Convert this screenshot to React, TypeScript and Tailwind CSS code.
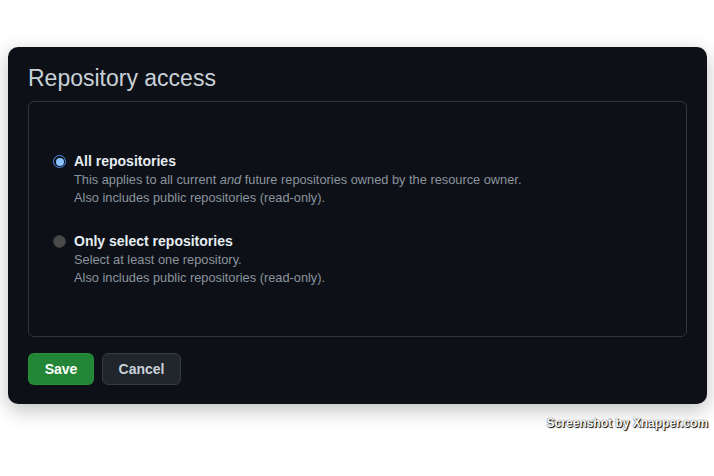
import type { ReactNode } from 'react';

const font = { fontFamily: '"Liberation Sans", Arial, sans-serif' };

function Radio({ checked }: { checked?: boolean }) {
  if (checked) {
    return (
      <span className="mt-[4px] flex h-[13px] w-[13px] shrink-0 items-center justify-center rounded-full border-[1.5px] border-[#4a8fe8] bg-[#0d1117]">
        <span className="h-[8px] w-[8px] rounded-full bg-[#8cc2ff]" />
      </span>
    );
  }
  return <span className="mt-[4px] h-[13px] w-[13px] shrink-0 rounded-full border border-[#3a3a3a] bg-[#4a4a4a]" />;
}

function Option({ checked, label, children }: { checked?: boolean; label: string; children: ReactNode }) {
  return (
    <label className="flex gap-[8px]">
      <Radio checked={checked} />
      <div className="flex flex-col">
        <span className="text-[14px] font-bold leading-[20px] text-[#e6edf3]">{label}</span>
        <div className="text-[12.8px] leading-[18px] text-[#8b949e]">{children}</div>
      </div>
    </label>
  );
}

export default function App() {
  return (
    <div className="relative h-[476px] w-[714px] bg-white" style={font}>
      <div className="pl-[8px] pt-[47px]">
        <div className="w-[699px] rounded-[10px] bg-[#0d1117] px-[20px] pb-[19px] pt-[16px] shadow-[0_6px_20px_rgba(0,0,0,0.25)]">
          <h2 className="text-[23px] leading-[30px] text-[#c9d1d9]">Repository access</h2>
          <div className="mt-[8px] flex h-[236px] flex-col justify-center gap-[24px] rounded-[6px] border border-[#30363d] pl-[24px]">
            <Option checked label="All repositories">
              <p>
                This applies to all current <em>and</em> future repositories owned by the resource owner.
              </p>
              <p>Also includes public repositories (read-only).</p>
            </Option>
            <Option label="Only select repositories">
              <p>Select at least one repository.</p>
              <p>Also includes public repositories (read-only).</p>
            </Option>
          </div>
          <div className="mt-[16px] flex gap-[8px]">
            <button className="h-[32px] w-[66px] rounded-[6px] border border-[#2ea043]/40 bg-[#238636] text-[14px] font-bold text-white">
              Save
            </button>
            <button className="h-[32px] w-[79px] rounded-[6px] border border-[#363b42] bg-[#21262d] text-[14px] font-bold text-[#c9d1d9]">
              Cancel
            </button>
          </div>
        </div>
      </div>
      <div
        className="absolute right-[6px] top-[414px] text-[12px] font-bold text-white"
        style={{ textShadow: '0 0 1px #000, 1px 1px 1px #000' }}
      >
        Screenshot by Xnapper.com
      </div>
    </div>
  );
}
